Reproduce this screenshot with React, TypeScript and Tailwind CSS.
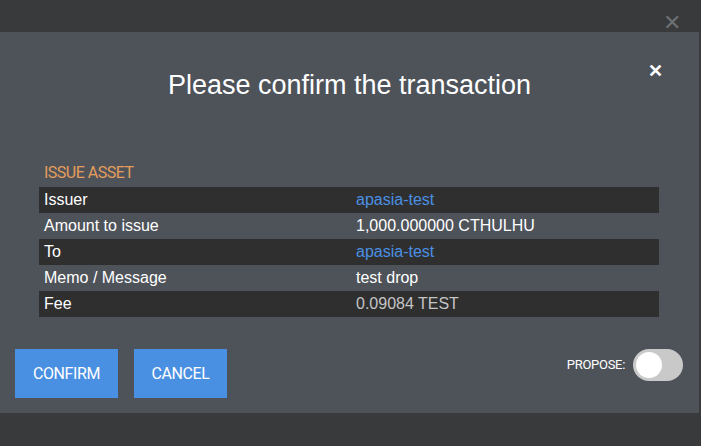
import React from 'react';

const rows = [
  { label: 'Issuer', value: 'apasia-test', kind: 'link' },
  { label: 'Amount to issue', value: '1,000.000000 CTHULHU', kind: 'text' },
  { label: 'To', value: 'apasia-test', kind: 'link' },
  { label: 'Memo / Message', value: 'test drop', kind: 'text' },
  { label: 'Fee', value: '0.09084 TEST', kind: 'muted' },
];

export default function App() {
  return (
    <div className="relative w-[701px] h-[446px] bg-[#393a3c] overflow-hidden flex flex-col pt-[32px]" style={{ fontFamily: '"Liberation Sans", Arial, sans-serif' }}>
      <span className="absolute right-[20px] top-[12px] text-[#6b6e72] text-[22px] leading-none">&#x2715;</span>

      <div className="relative w-[699px] h-[381px] bg-[#4e535a] flex flex-col">
        <button className="absolute right-[36px] top-[30px] text-white text-[18px] leading-none font-bold">&#x2715;</button>

        <h1 className="text-white text-[27px] text-center mt-[38px] leading-[30px]">Please confirm the transaction</h1>

        <div className="mx-[39px] mt-[63px] w-[620px]">
          <div className="pl-[5px] text-[#e59d5c] text-[16px] leading-[19px] pb-[5px] tracking-[-0.5px]" style={{ fontFamily: 'Roboto, sans-serif' }}>ISSUE ASSET</div>
          {rows.map((r, i) => (
            <div key={r.label} className={`grid grid-cols-2 h-[26px] items-center text-[16px] ${i % 2 === 0 ? 'bg-[#2f2f30]' : ''}`}>
              <div className="pl-[5px] text-white">{r.label}</div>
              <div className={`pl-[7px] ${r.kind === 'link' ? 'text-[#4a90e2]' : r.kind === 'muted' ? 'text-[#c4c4c4]' : 'text-white'}`}>{r.value}</div>
            </div>
          ))}
        </div>

        <div className="flex items-start justify-between mt-[32px] px-[15px]">
          <div className="flex gap-[16px]" style={{ fontFamily: 'Roboto, sans-serif' }}>
            <button className="w-[103px] h-[49px] bg-[#4a90e2] text-white text-[16px] tracking-[-0.4px]">CONFIRM</button>
            <button className="w-[93px] h-[49px] bg-[#4a90e2] text-white text-[16px] tracking-[-0.4px]">CANCEL</button>
          </div>
          <div className="flex items-center gap-[8px] mr-[1px]">
            <span className="text-white text-[13px] tracking-[-0.3px]" style={{ fontFamily: 'Roboto, sans-serif' }}>PROPOSE:</span>
            <div className="w-[50px] h-[32px] rounded-full bg-[#c9c9c9] flex items-center px-[3px]">
              <div className="w-[26px] h-[26px] rounded-full bg-white"></div>
            </div>
          </div>
        </div>
      </div>
    </div>
  );
}
